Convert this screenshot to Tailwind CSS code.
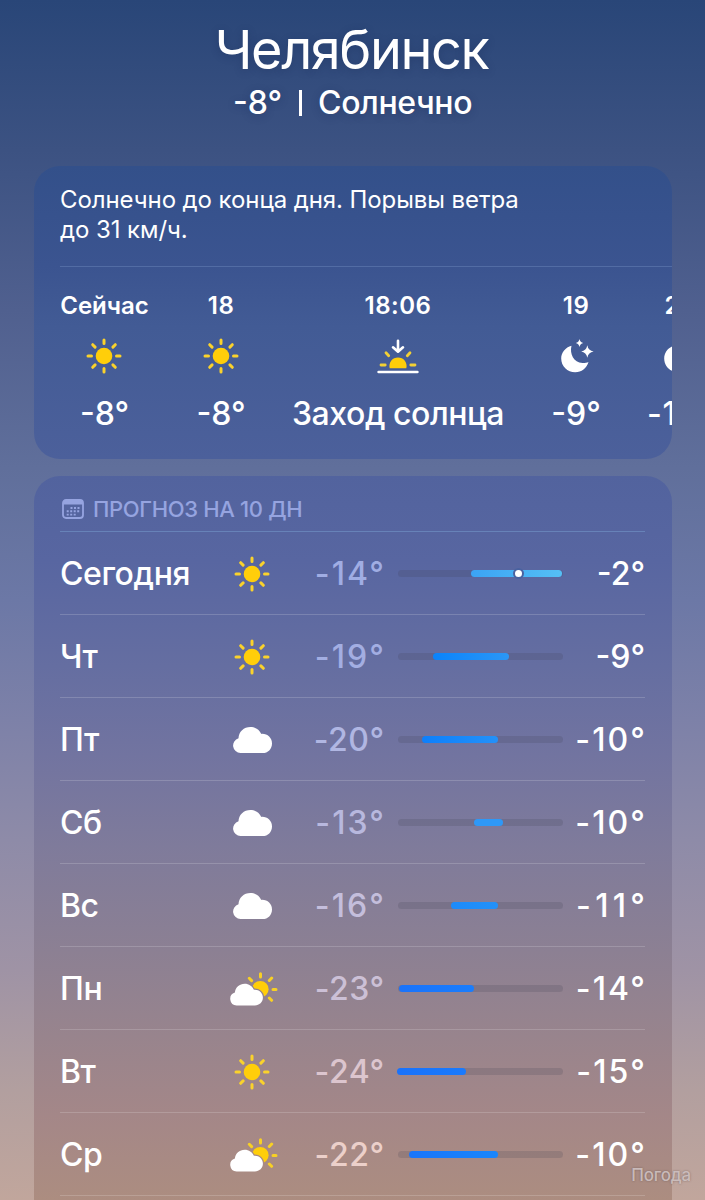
<!DOCTYPE html>
<html lang="ru">
<head>
<meta charset="utf-8">
<title>Погода</title>
<script src="https://cdn.jsdelivr.net/npm/@tailwindcss/browser@4"></script>
</head>
<body class="relative h-[1200px] w-[705px] overflow-hidden bg-[linear-gradient(180deg,#294678_0px,#3c5282_150px,#50608f_310px,#606f9b_468px,#6c78a6_600px,#7d81a8_720px,#8e8ba8_840px,#9f93a5_970px,#b29f9f_1090px,#c1a69c_1200px)] font-['Inter',sans-serif] text-white">
<svg class="absolute size-0">
  <mask id="behind-cloud" maskUnits="userSpaceOnUse" x="0" y="0" width="48" height="34">
    <rect width="48" height="34" fill="#fff"/>
    <path fill="#000" stroke="#000" stroke-width="2.400" d="M6.600 33.500a6.600 6.600 0 0 1-1.700-12.900C5.200 15.500 9.500 11.700 14.700 11.700c4.200 0 7.500 2.300 9.200 6.100 5-.5 9 3.100 9 7.800 0 4.600-3.500 7.900-8 7.900z"/>
  </mask>
  <symbol id="sun" viewBox="-18 -18 36 36">
    <circle r="8.3" fill="#ffce0a"/>
    <g stroke="#fad22c" stroke-width="3" stroke-linecap="round">
      <path d="M0-12.5V-16M0 12.5V16M-12.5 0H-16M12.5 0H16M-8.9-8.9L-11.3-11.3M8.9-8.9L11.3-11.3M-8.9 8.9L-11.3 11.3M8.9 8.9L11.3 11.3"/>
    </g>
  </symbol>
  <symbol id="cloud" viewBox="0 0 39 26">
    <path fill="#fff" d="M7.500 26a7.500 7.500 0 0 1-2-14.700C5.700 4.800 10.900 0 17.400 0c4.800 0 8.800 2.600 10.900 6.900C34.200 6.400 39 10.800 39 16.400 39 22 34.900 26 29.600 26z"/>
  </symbol>
  <symbol id="partly" viewBox="0 0 48 34">
    <circle cx="30.300" cy="17.200" r="8.300" fill="#ffce0a" mask="url(#behind-cloud)"/>
    <g stroke="#f8d024" stroke-width="3" stroke-linecap="round">
      <path d="M30.500 5V1.800M39.300 8.500L41.700 6M43 17.500H46M39.300 26L41.600 28.300M21.600 8.600L19.300 6.300"/>
    </g>
    <path fill="#fff" d="M6.600 33.500a6.600 6.600 0 0 1-1.700-12.900C5.200 15.500 9.500 11.700 14.700 11.700c4.200 0 7.500 2.300 9.200 6.100 5-.5 9 3.100 9 7.800 0 4.600-3.500 7.900-8 7.900z"/>
  </symbol>
  <symbol id="moon" viewBox="0 0 34 36">
    <path fill="#fff" d="M11.500 7.700C9.500 15.500 13.500 24.500 22.500 25c2.400.1 4.200-.3 6-1C26.600 30.300 21.500 34.200 15.200 34.200 7.400 34.200 1.200 28.300 1.200 20.500 1.200 14.400 5.500 9.300 11.500 7.700Z"/>
    <path fill="#fff" d="M27.300 7.200Q28.300 12.700 33.600 13.500 28.300 14.300 27.300 19.800 26.300 14.300 21.200 13.500 26.300 12.700 27.300 7.200ZM19.500 1Q20.200 4.400 23.300 5 20.200 5.600 19.500 9 18.800 5.600 15.700 5 18.800 4.400 19.500 1Z"/>
  </symbol>
  <symbol id="sunset" viewBox="0 0 42 36">
    <path fill="#ffce0a" d="M12.700 30.300A8.600 8.600 0 1 1 29.300 30.300Z"/>
    <g fill="none" stroke-linecap="round">
      <path stroke="#f2d035" stroke-width="2.800" d="M4 27H8.200M33.800 27H38M9 14.800L11.700 17.700M33 14.800L30.300 17.700"/>
      <path stroke="#fff" stroke-width="2.600" stroke-linejoin="round" d="M21 2.700V13M16 9.300L21 13.700 26 9.300M1.600 34H40.400"/>
    </g>
  </symbol>
</svg>

<header class="flex flex-col items-center [text-shadow:0_2px_8px_rgb(20_35_80/0.3)]">
  <h1 class="mr-[2px] mt-[18px] h-[64px] whitespace-nowrap text-[54px] leading-[64px] tracking-[-1.4px]">Челябинск</h1>
  <p class="mt-[1px] flex h-[40px] items-center whitespace-nowrap text-[32px] font-medium leading-[40px]"><span>-8°</span><span class="ml-[17px] mr-[16px] h-[26px] w-[3px] bg-white"></span><span class="tracking-[-0.4px]">Солнечно</span></p>
</header>

<main class="pl-[34px] pr-[33px] pt-[43px]">
  <section class="h-[293px] overflow-hidden rounded-[26px] bg-[linear-gradient(180deg,#33508a_0px,#3b5490_100px,#425b95_160px,#4c609b_293px)] pl-[26px]">
    <p class="h-[101px] border-b border-[#526ca4] pt-[19px] text-[24px] leading-[30px] tracking-[-0.08px]">Солнечно до конца дня. Порывы ветра<br>до 31 км/ч.</p>
    <div class="flex w-[700px] pt-[25px]">
      <div class="flex w-[89px] flex-col items-center"><span class="h-7 text-2xl font-semibold leading-7">Сейчас</span><svg class="mr-[1px] mt-[18px] size-9"><use href="#sun"/></svg><span class="mt-5 h-10 whitespace-nowrap text-[32px] font-medium leading-10">-8°</span></div>
      <div class="ml-[42px] flex w-[60px] flex-col items-center"><span class="h-7 text-2xl font-semibold leading-7 tracking-[0.5px]">18</span><svg class="mt-[18px] size-9"><use href="#sun"/></svg><span class="mt-5 h-10 whitespace-nowrap text-[32px] font-medium leading-10">-8°</span></div>
      <div class="ml-[37px] flex w-[220px] flex-col items-center"><span class="h-7 text-2xl font-semibold leading-7 tracking-[0.5px]">18:06</span><svg class="mt-[18px] h-9 w-[42px]"><use href="#sunset"/></svg><span class="mt-5 h-10 whitespace-nowrap text-[32px] font-medium leading-10 tracking-[-0.45px]">Заход солнца</span></div>
      <div class="ml-[38px] flex w-[60px] flex-col items-center"><span class="h-7 text-2xl font-semibold leading-7 tracking-[0.5px]">19</span><svg class="ml-[2px] mt-[18px] h-9 w-[34px]"><use href="#moon"/></svg><span class="mt-5 h-10 whitespace-nowrap text-[32px] font-medium leading-10">-9°</span></div>
      <div class="ml-[36px] flex w-[76px] flex-col items-center"><span class="h-7 text-2xl font-semibold leading-7">20</span><svg class="mt-[18px] h-9 w-[34px]"><use href="#moon"/></svg><span class="mt-5 h-10 whitespace-nowrap text-[32px] font-medium leading-10 tracking-[0.6px]">-10°</span></div>
    </div>
  </section>

  <section class="mt-[17px] h-[760px] rounded-t-[26px] bg-[linear-gradient(180deg,#52639e_0px,#5866a1_85px,#656ea1_190px,#7274a0_280px,#7f7b9b_370px,#8c8093_475px,#98848d_560px,#a48788_640px,#ac8d80_724px)] pl-[26px] pr-[27px]">
    <div class="flex h-[56px] items-center border-b border-[#6782b8] pt-[10px] text-[#96a4e0]">
      <svg class="ml-[2px] mr-[9px] h-5 w-[22px]" viewBox="0 0 22 20" fill="none">
        <rect x="1" y="1" width="20" height="18" rx="3" stroke="#96a4e0" stroke-width="1.800"/>
        <path d="M1 4a3 3 0 0 1 3-3h14a3 3 0 0 1 3 3v1.500H1z" fill="#96a4e0"/>
        <path d="M8.500 9H18M4.700 12.300H18M4.700 15.600H14.500" stroke="#96a4e0" stroke-width="1.900" stroke-dasharray="2 1.500"/>
      </svg>
      <h2 class="whitespace-nowrap text-[22px] font-medium leading-7 tracking-[-0.35px]">ПРОГНОЗ НА 10 ДН</h2>
    </div>
    <div id="days"></div>
  </section>
</main>
<div class="absolute right-[14px] top-[1164px] text-[17px] font-medium leading-[22px] tracking-[-0.2px] text-[#d5c8c8]/85 [text-shadow:0_0_2px_rgb(90_70_70/0.6)]">Погода</div>

<template id="row">
  <div class="flex h-[83px] items-center border-b border-white/17 pt-[1px] text-[32px] font-medium leading-10">
    <span data-day class="w-[166px] tracking-[-0.4px]"></span>
    <span data-icon class="flex w-[52px] justify-center"></span>
    <span class="flex w-[106px] justify-end"><span data-low></span></span>
    <span class="relative ml-[14px] h-[7px] w-[165px] rounded-full bg-[#3c3c50]/18">
      <i data-bar class="absolute inset-y-0 rounded-full"></i>
    </span>
    <span class="flex flex-1 justify-end"><span data-high></span></span>
  </div>
</template>
<script>
const icons = {
  sun: '<svg class="size-9"><use href="#sun"/></svg>',
  cloud: '<svg class="h-[26px] w-[39px]"><use href="#cloud"/></svg>',
  partly: '<svg class="ml-[4px] h-[34px] w-12 shrink-0"><use href="#partly"/></svg>'
};
const dot = '<b class="absolute left-[42px] top-[-2px] size-[11px] rounded-full border-2 border-[#4a62a0] bg-white"></b>';
// day, icon, low, high, bar start, bar width, gradient colours, colour of the low
const days = [
  ['Сегодня','sun','-14°','-2°',73,91,'#3ba3f4','#55bff5','#a0ade3'],
  ['Чт','sun','-19°','-9°',35,76,'#0a83fb','#2b97f6','#a3aee2'],
  ['Пт','cloud','-20°','-10°',24,76,'#0d7ffb','#2491f8','#b0b6e2'],
  ['Сб','cloud','-13°','-10°',76,29,'#2e98f7','#2e98f7','#b8b8de'],
  ['Вс','cloud','-16°','-11°',53,47,'#1d8bfa','#2391f8','#c4bedc'],
  ['Пн','partly','-23°','-14°',1,75,'#1a73fa','#1a7dfc','#ccc0d6'],
  ['Вт','sun','-24°','-15°',-1,69,'#1a72fa','#1a7afc','#dcc5ce'],
  ['Ср','partly','-22°','-10°',11,89,'#1a75fa','#1a86fb','#ecd0ca']
];
// every two-digit temperature takes the same width, however narrow its ones are
const setTemp = (el, text) => {
  const gap = text.length < 4 ? 0 : [0.5, 2.1, 4.3][text.split('1').length - 1];
  el.textContent = text;
  el.style.letterSpacing = gap + 'px';
  el.style.marginRight = -gap + 'px';
};
const tpl = document.getElementById('row');
days.forEach((d, i) => {
  const r = tpl.content.cloneNode(true), q = s => r.querySelector(s);
  q('[data-day]').textContent = d[0];
  q('[data-icon]').innerHTML = icons[d[1]];
  setTemp(q('[data-low]'), d[2]);
  q('[data-low]').style.color = d[8];
  setTemp(q('[data-high]'), d[3]);
  const b = q('[data-bar]');
  b.style.left = d[4] + 'px';
  b.style.width = d[5] + 'px';
  b.style.background = `linear-gradient(90deg,${d[6]},${d[7]})`;
  if (i === 0) b.innerHTML = dot;
  document.getElementById('days').append(r);
});
</script>
</body>
</html>
